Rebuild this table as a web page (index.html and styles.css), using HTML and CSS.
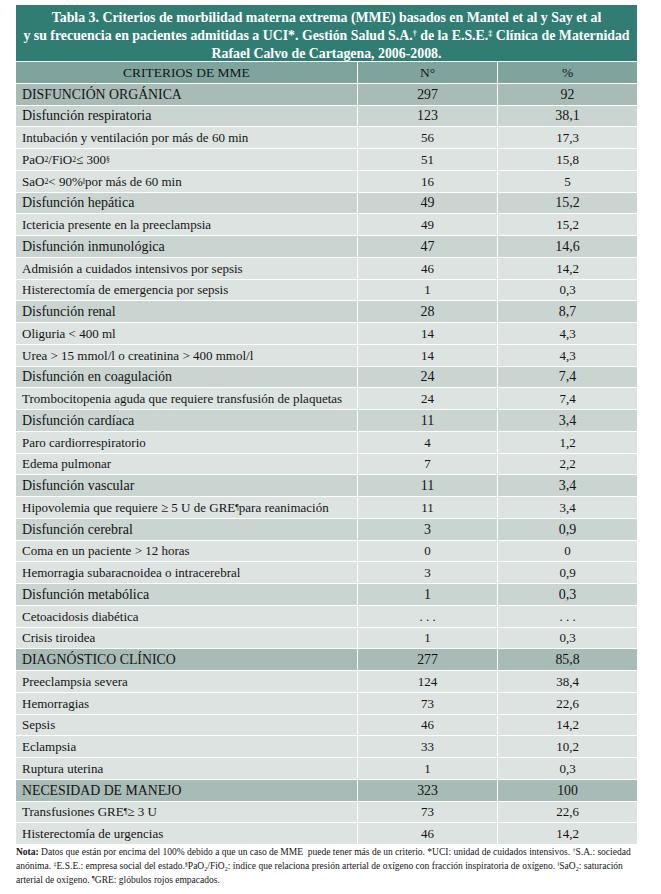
FILE: index.html
```html
<!DOCTYPE html>
<html lang="es">
<head>
<meta charset="utf-8">
<title>Tabla 3</title>
<link rel="stylesheet" href="styles.css">
</head>
<body>
<div class="wrap">
  <div class="title">Tabla 3. Criterios de morbilidad materna extrema (MME) basados en Mantel et al y Say et al<br>y su frecuencia en pacientes admitidas a UCI*. Gestión Salud S.A.<sup>†</sup> de la E.S.E.<sup>‡</sup> Clínica de Maternidad<br>Rafael Calvo de Cartagena, 2006-2008.</div>
  <div class="table">
    <div class="row head"><div class="c1 center">CRITERIOS DE MME</div><div class="cn">N°</div><div class="cn">%</div></div>
    <div class="row main"><div class="c1">DISFUNCIÓN ORGÁNICA</div><div class="cn">297</div><div class="cn">92</div></div>
    <div class="row sub"><div class="c1">Disfunción respiratoria</div><div class="cn">123</div><div class="cn">38,1</div></div>
    <div class="row det"><div class="c1">Intubación y ventilación por más de 60 min</div><div class="cn">56</div><div class="cn">17,3</div></div>
    <div class="row det"><div class="c1">PaO<sub>2</sub>/FiO<sub>2</sub> ≤ 300<sup>§</sup></div><div class="cn">51</div><div class="cn">15,8</div></div>
    <div class="row det"><div class="c1">SaO<sub>2</sub> &lt; 90%<sup>‖</sup> por más de 60 min</div><div class="cn">16</div><div class="cn">5</div></div>
    <div class="row sub"><div class="c1">Disfunción hepática</div><div class="cn">49</div><div class="cn">15,2</div></div>
    <div class="row det"><div class="c1">Ictericia presente en la preeclampsia</div><div class="cn">49</div><div class="cn">15,2</div></div>
    <div class="row sub"><div class="c1">Disfunción inmunológica</div><div class="cn">47</div><div class="cn">14,6</div></div>
    <div class="row det"><div class="c1">Admisión a cuidados intensivos por sepsis</div><div class="cn">46</div><div class="cn">14,2</div></div>
    <div class="row det"><div class="c1">Histerectomía de emergencia por sepsis</div><div class="cn">1</div><div class="cn">0,3</div></div>
    <div class="row sub"><div class="c1">Disfunción renal</div><div class="cn">28</div><div class="cn">8,7</div></div>
    <div class="row det"><div class="c1">Oliguria &lt; 400 ml</div><div class="cn">14</div><div class="cn">4,3</div></div>
    <div class="row det"><div class="c1">Urea &gt; 15 mmol/l o creatinina &gt; 400 mmol/l</div><div class="cn">14</div><div class="cn">4,3</div></div>
    <div class="row sub"><div class="c1">Disfunción en coagulación</div><div class="cn">24</div><div class="cn">7,4</div></div>
    <div class="row det"><div class="c1">Trombocitopenia aguda que requiere transfusión de plaquetas</div><div class="cn">24</div><div class="cn">7,4</div></div>
    <div class="row sub"><div class="c1">Disfunción cardíaca</div><div class="cn">11</div><div class="cn">3,4</div></div>
    <div class="row det"><div class="c1">Paro cardiorrespiratorio</div><div class="cn">4</div><div class="cn">1,2</div></div>
    <div class="row det"><div class="c1">Edema pulmonar</div><div class="cn">7</div><div class="cn">2,2</div></div>
    <div class="row sub"><div class="c1">Disfunción vascular</div><div class="cn">11</div><div class="cn">3,4</div></div>
    <div class="row det"><div class="c1">Hipovolemia que requiere ≥ 5 U de GRE<sup>¶</sup>para reanimación</div><div class="cn">11</div><div class="cn">3,4</div></div>
    <div class="row sub"><div class="c1">Disfunción cerebral</div><div class="cn">3</div><div class="cn">0,9</div></div>
    <div class="row det"><div class="c1">Coma en un paciente &gt; 12 horas</div><div class="cn">0</div><div class="cn">0</div></div>
    <div class="row det"><div class="c1">Hemorragia subaracnoidea o intracerebral</div><div class="cn">3</div><div class="cn">0,9</div></div>
    <div class="row sub"><div class="c1">Disfunción metabólica</div><div class="cn">1</div><div class="cn">0,3</div></div>
    <div class="row det"><div class="c1">Cetoacidosis diabética</div><div class="cn">. . .</div><div class="cn">. . .</div></div>
    <div class="row det"><div class="c1">Crisis tiroidea</div><div class="cn">1</div><div class="cn">0,3</div></div>
    <div class="row main"><div class="c1">DIAGNÓSTICO CLÍNICO</div><div class="cn">277</div><div class="cn">85,8</div></div>
    <div class="row det"><div class="c1">Preeclampsia severa</div><div class="cn">124</div><div class="cn">38,4</div></div>
    <div class="row det"><div class="c1">Hemorragias</div><div class="cn">73</div><div class="cn">22,6</div></div>
    <div class="row det"><div class="c1">Sepsis</div><div class="cn">46</div><div class="cn">14,2</div></div>
    <div class="row det"><div class="c1">Eclampsia</div><div class="cn">33</div><div class="cn">10,2</div></div>
    <div class="row det"><div class="c1">Ruptura uterina</div><div class="cn">1</div><div class="cn">0,3</div></div>
    <div class="row main"><div class="c1">NECESIDAD DE MANEJO</div><div class="cn">323</div><div class="cn">100</div></div>
    <div class="row det"><div class="c1">Transfusiones GRE<sup>¶</sup> ≥ 3 U</div><div class="cn">73</div><div class="cn">22,6</div></div>
    <div class="row det"><div class="c1">Histerectomía de urgencias</div><div class="cn">46</div><div class="cn">14,2</div></div>
  </div>
  <p class="note"><b>Nota:</b> Datos que están por encima del 100% debido a que un caso de MME&nbsp; puede tener más de un criterio. *UCI: unidad de cuidados intensivos. <sup>†</sup>S.A.: sociedad anónima. <sup>‡</sup>E.S.E.: empresa social del estado.<sup>§</sup>PaO<sub>2</sub>/FiO<sub>2</sub>: índice que relaciona presión arterial de oxígeno con fracción inspiratoria de oxígeno. <sup>‖</sup>SaO<sub>2</sub>: saturación arterial de oxígeno. <sup>¶</sup>GRE: glóbulos rojos empacados.</p>
</div>
</body>
</html>
```
FILE: styles.css
```css
html, body {
  margin: 0;
  padding: 0;
  background: #ffffff;
}
body {
  font-family: "Liberation Serif", "Times New Roman", serif;
  color: #141414;
}
.wrap {
  width: 621px;
  margin: 5px 0 0 16px;
}
.title {
  background: #317d73;
  color: #ffffff;
  font-weight: bold;
  font-size: 13.85px;
  line-height: 18px;
  text-align: center;
  height: 56px;
  box-sizing: border-box;
  padding-top: 4px;
  white-space: nowrap;
}
.title sup {
  font-size: 8px;
  line-height: 0;
}
.row {
  display: grid;
  grid-template-columns: 341px 140px 140px;
  height: 21.76px;
  box-sizing: border-box;
  border-top: 1px solid #ffffff;
}
.row > div {
  display: flex;
  align-items: center;
  white-space: nowrap;
  padding-top: 1px;
  box-sizing: border-box;
}
.cn {
  justify-content: center;
  border-left: 1px solid #ffffff;
}
.c1 {
  padding-left: 6px;
}
.c1.center {
  justify-content: center;
  padding-left: 0;
}
.head {
  background: #7fa49d;
  font-size: 13.5px;
}
.main {
  background: #a9bbb7;
  font-size: 13.8px;
}
.sub {
  background: #cad5d2;
  font-size: 14px;
}
.det {
  background: #dde3e1;
  font-size: 13px;
}
.det .cn {
  font-size: 13px;
}
sup {
  font-size: 0.6em;
  line-height: 0;
  vertical-align: 0.5em;
}
sub {
  font-size: 0.6em;
  line-height: 0;
  vertical-align: -0.25em;
}
.note {
  margin: 0;
  font-size: 9.5px;
  line-height: 14px;
  padding-top: 1px;
}
.note sup, .note sub {
  font-size: 0.65em;
}
.note b {
  font-weight: bold;
}
```
